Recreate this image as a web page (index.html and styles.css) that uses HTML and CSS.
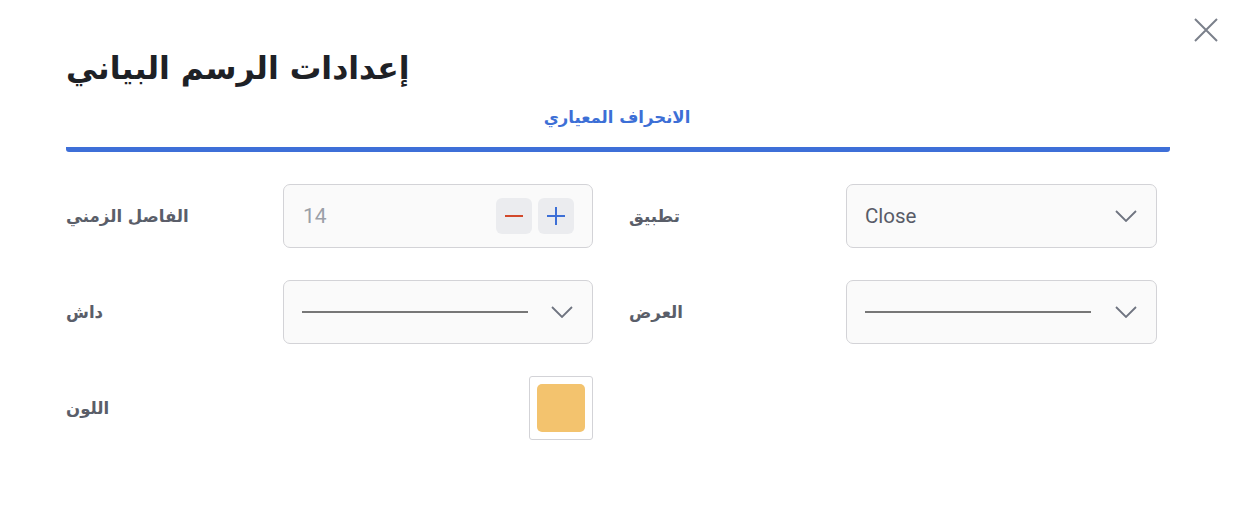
FILE: index.html
```html
<!DOCTYPE html>
<html lang="ar">
<head>
<meta charset="utf-8">
<link rel="stylesheet" href="styles.css">
</head>
<body>
<div class="dialog">
  <button class="close" aria-label="close">
    <svg width="26" height="26" viewBox="0 0 26 26"><path d="M2 2 L24 24 M24 2 L2 24" stroke="#7b808b" stroke-width="2" fill="none"/></svg>
  </button>
  <h1 class="title">إعدادات الرسم البياني</h1>
  <div class="tabs">
    <div class="tab">الانحراف المعياري</div>
  </div>
  <div class="form">
    <div class="field">
      <div class="label">الفاصل الزمني</div>
      <div class="box number">
        <span class="value">14</span>
        <div class="steppers">
          <span class="step minus"><svg width="20" height="20" viewBox="0 0 20 20"><path d="M1 10 H19" stroke="#d2492b" stroke-width="2"/></svg></span>
          <span class="step plus"><svg width="20" height="20" viewBox="0 0 20 20"><path d="M1 10 H19 M10 1 V19" stroke="#3d6fd6" stroke-width="2"/></svg></span>
        </div>
      </div>
    </div>
    <div class="field">
      <div class="label">تطبيق</div>
      <div class="box select">
        <span class="sel-text">Close</span>
        <svg class="chev" width="22" height="12" viewBox="0 0 22 12"><path d="M1 1 L11 11 L21 1" stroke="#6f7480" stroke-width="1.8" fill="none"/></svg>
      </div>
    </div>
    <div class="field">
      <div class="label">داش</div>
      <div class="box select">
        <span class="line"></span>
        <svg class="chev" width="22" height="12" viewBox="0 0 22 12"><path d="M1 1 L11 11 L21 1" stroke="#6f7480" stroke-width="1.8" fill="none"/></svg>
      </div>
    </div>
    <div class="field">
      <div class="label">العرض</div>
      <div class="box select">
        <span class="line"></span>
        <svg class="chev" width="22" height="12" viewBox="0 0 22 12"><path d="M1 1 L11 11 L21 1" stroke="#6f7480" stroke-width="1.8" fill="none"/></svg>
      </div>
    </div>
    <div class="field">
      <div class="label">اللون</div>
      <div class="color-cell">
        <div class="swatch-box"><div class="swatch"></div></div>
      </div>
    </div>
  </div>
</div>
</body>
</html>
```

FILE: styles.css
```css
html, body {
  margin: 0;
  padding: 0;
  background: #ffffff;
}
body {
  font-family: "DejaVu Sans", "Noto Sans", sans-serif;
  width: 1238px;
  height: 524px;
  overflow: hidden;
}
.dialog {
  position: relative;
  padding: 40px 68px 0 66px;
}
.close {
  position: absolute;
  top: 17px;
  right: 19px;
  border: 0;
  background: none;
  padding: 0;
  width: 26px;
  height: 26px;
  cursor: pointer;
}
.close svg { display: block; }
.title {
  margin: 0;
  font-size: 31.5px;
  font-weight: bold;
  color: #1e2126;
  line-height: 56px;
  height: 56px;
}
.tabs {
  margin-top: 5px;
  display: flex;
  justify-content: center;
  border-bottom: 5px solid #3e6fd8;
  border-radius: 3px;
  padding-bottom: 12px;
}
.tab {
  color: #3d6fd6;
  font-size: 16.5px;
  font-weight: bold;
  line-height: 34px;
  padding-right: 2px;
}
.form {
  margin-top: 32px;
  display: grid;
  grid-template-columns: 527px 528px;
  column-gap: 36px;
  row-gap: 32px;
}
.field {
  display: flex;
  align-items: center;
}
.label {
  width: 217px;
  flex: none;
  font-size: 16.6px;
  font-weight: bold;
  color: #5a5e69;
}
.box {
  box-sizing: border-box;
  flex: 1;
  height: 64px;
  border: 1px solid #d3d3d7;
  border-radius: 7px;
  background: #fafafa;
  display: flex;
  align-items: center;
}
.number {
  padding: 0 18px 0 19px;
  justify-content: space-between;
}
.value {
  font-family: Roboto, "Liberation Sans", sans-serif;
  font-size: 21px;
  color: #9ba0a8;
}
.steppers {
  display: flex;
  gap: 6px;
}
.step {
  width: 36px;
  height: 36px;
  border-radius: 6px;
  background: #ebecef;
  display: flex;
  align-items: center;
  justify-content: center;
}
.step svg { display: block; }
.select {
  padding: 0 19px 0 18px;
  justify-content: space-between;
}
.sel-text {
  font-family: Roboto, "Liberation Sans", sans-serif;
  font-size: 20.5px;
  color: #585c68;
}
.line {
  width: 226px;
  height: 2px;
  background: #777777;
}
.chev { display: block; }
.color-cell {
  flex: 1;
  display: flex;
  justify-content: flex-end;
}
.swatch-box {
  box-sizing: border-box;
  width: 64px;
  height: 64px;
  border: 1px solid #d3d3d7;
  border-radius: 3px;
  display: flex;
  align-items: center;
  justify-content: center;
}
.swatch {
  width: 48px;
  height: 48px;
  border-radius: 5px;
  background: #f3c36e;
}
```
